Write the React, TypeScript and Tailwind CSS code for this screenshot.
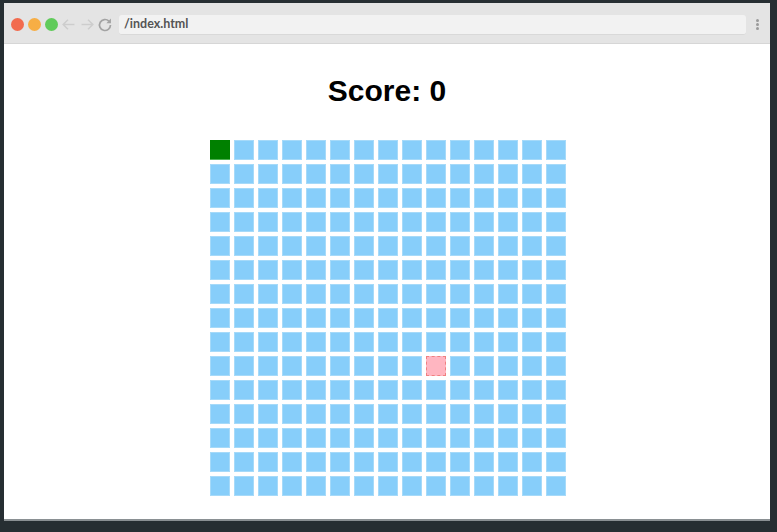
import React from "react";

const SIZE = 15;
const SNAKE = [0];
const FOOD = 9 * SIZE + 9;

const Cell = ({ index }: { index: number }) => {
  if (SNAKE.includes(index)) {
    return <div className="w-5 h-5 bg-[#008000] border-b border-[#4caf50]" />;
  }
  if (index === FOOD) {
    return (
      <div className="w-5 h-5 bg-[#ffb6c1] border border-dashed border-[#f08080]" />
    );
  }
  return <div className="w-5 h-5 bg-[#87cefa] border border-[#a6daf9]" />;
};

const App = () => {
  return (
    <div className="w-[777px] h-[532px] bg-[#262e32] pt-[3px] pl-[4px] overflow-hidden font-['Liberation_Sans',Arial,sans-serif]">
      {/* Browser window */}
      <div className="w-[766px] h-[518px] bg-white flex flex-col border-b-2 border-[#8a9093]">
        {/* Toolbar */}
        <div className="h-[41px] shrink-0 bg-[#e4e4e4] border-b border-[#d6d6d6] flex items-center pt-[3px] pl-[7px] pr-[8px]">
          <div className="flex items-center gap-[4px]">
            <span className="w-[13px] h-[13px] rounded-full bg-[#f26b4e]" />
            <span className="w-[13px] h-[13px] rounded-full bg-[#f7ae45]" />
            <span className="w-[13px] h-[13px] rounded-full bg-[#60cb5a]" />
          </div>
          <svg width="15" height="15" viewBox="0 0 14 14" className="ml-[3px]">
            <path d="M12.5 7H1.5M6.5 2.5L2 7l4.5 4.5" fill="none" stroke="#cdcdcd" strokeWidth="1.4" />
          </svg>
          <svg width="15" height="15" viewBox="0 0 14 14" className="ml-[4px]">
            <path d="M1.5 7h11M7.5 2.5L12 7l-4.5 4.5" fill="none" stroke="#cdcdcd" strokeWidth="1.4" />
          </svg>
          <svg width="16" height="16" viewBox="0 0 14 14" className="ml-[2px]">
            <path d="M11.8 7a4.8 4.8 0 1 1-1.4-3.4" fill="none" stroke="#a3a3a3" strokeWidth="1.5" />
            <path d="M12.2 1.4v4H8.2z" fill="#a3a3a3" />
          </svg>
          <div className="ml-[6px] flex-1 h-[20px] bg-[#f2f2f2] rounded-[3px] border-b border-[#d9d9d9] flex items-center px-[5px] text-[12.5px] font-bold text-[#555] font-['Lato',sans-serif]">
            /index.html
          </div>
          <div className="w-[10px] flex flex-col items-center gap-[1px] ml-[6px]">
            <span className="w-[3px] h-[3px] rounded-full bg-[#9a9a9a]" />
            <span className="w-[3px] h-[3px] rounded-full bg-[#9a9a9a]" />
            <span className="w-[3px] h-[3px] rounded-full bg-[#9a9a9a]" />
          </div>
        </div>

        {/* Page */}
        <div className="flex-1 flex flex-col items-center pt-[32px]">
          <h1 className="text-[30px] leading-[30px] font-bold text-black">Score: 0</h1>
          <div className="mt-[34px] grid grid-cols-[repeat(15,20px)] gap-[4px] ml-[2px]">
            {Array.from({ length: SIZE * SIZE }, (_, i) => (
              <Cell key={i} index={i} />
            ))}
          </div>
        </div>
      </div>
    </div>
  );
};

export default App;
